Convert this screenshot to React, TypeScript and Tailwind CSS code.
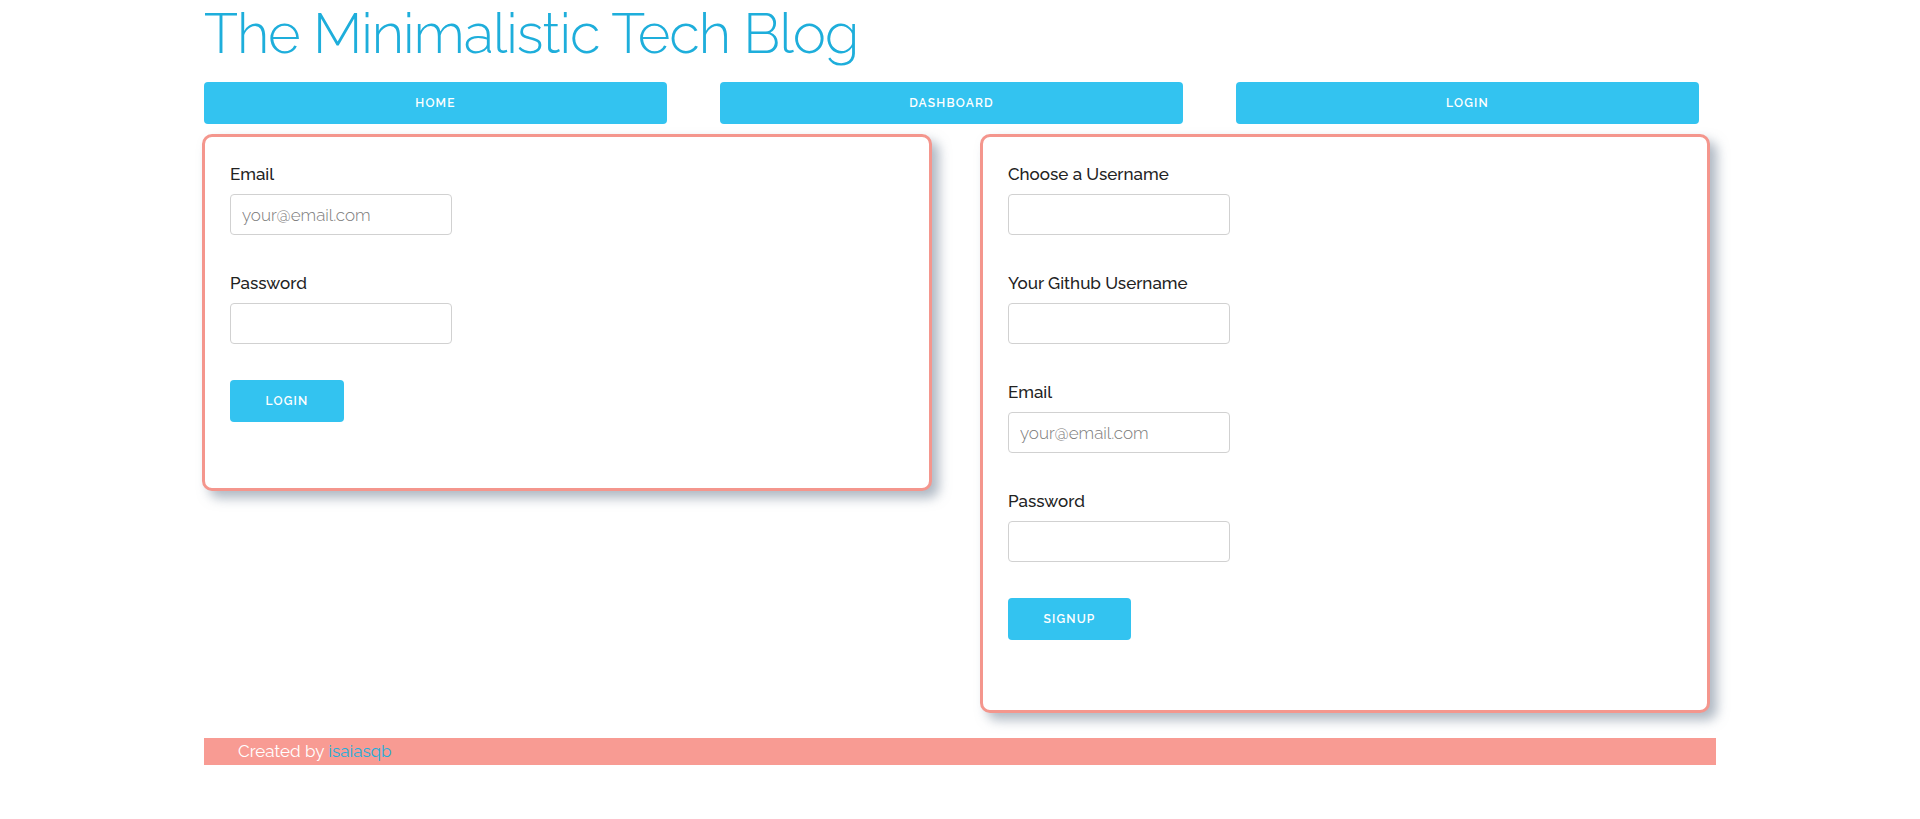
import React from "react";

const font = { fontFamily: '"Raleway", "Lato", "Noto Sans", sans-serif' };

function Field({ label, placeholder, type = "text" }: { label: string; placeholder?: string; type?: string }) {
  return (
    <div className="flex flex-col mb-[38px]">
      <label className="text-[17px] leading-[20px] font-medium text-[#222] mb-[10px]">{label}</label>
      <input
        type={type}
        placeholder={placeholder}
        className="w-[222px] h-[41px] border border-[#d1d1d1] rounded-[4px] px-[11px] text-[17px] text-[#333] placeholder:text-[#7a7a7a] placeholder:font-light bg-white outline-none"
      />
    </div>
  );
}

function Card({ children, pb }: { children: React.ReactNode; pb: string }) {
  return (
    <div
      className={`w-[730px] border-[3px] border-[#f4968d] rounded-[10px] bg-white shadow-[7px_7px_12px_rgba(110,125,145,0.55)] pt-[27px] px-[25px] ${pb}`}
    >
      {children}
    </div>
  );
}

function Btn({ children, w }: { children: React.ReactNode; w: string }) {
  return (
    <button className={`${w} h-[42px] -mt-[2px] rounded-[4px] bg-[#33c3f0] text-white text-[12px] font-semibold tracking-[1.2px] uppercase`}>
      {children}
    </button>
  );
}

export default function App() {
  return (
    <div className="min-h-[819px] bg-white" style={font}>
      <div className="w-[1512px] mx-auto">
        <h1
          className="text-[56px] leading-[66px] text-[#1eaedb] tracking-[-1.05px]"
          style={{ fontFamily: '"Raleway", "Inter", sans-serif', fontWeight: 300 }}
        >
          The Minimalistic Tech Blog
        </h1>
        <nav className="flex gap-[53px] mt-[16px]">
          {["Home", "Dashboard", "Login"].map((t) => (
            <a
              key={t}
              className="w-[463px] h-[42px] rounded-[4px] bg-[#33c3f0] text-white text-[12px] font-semibold tracking-[1.2px] uppercase flex items-center justify-center"
            >
              {t}
            </a>
          ))}
        </nav>
        <div className="flex items-start gap-[48px] mt-[10px] ml-[-2px]">
          <Card pb="pb-[66px]">
            <Field label="Email" placeholder="your@email.com" />
            <Field label="Password" type="password" />
            <Btn w="w-[114px]">Login</Btn>
          </Card>
          <Card pb="pb-[70px]">
            <Field label="Choose a Username" />
            <Field label="Your Github Username" />
            <Field label="Email" placeholder="your@email.com" />
            <Field label="Password" type="password" />
            <Btn w="w-[123px]">Signup</Btn>
          </Card>
        </div>
        <footer className="mt-[25px] h-[27px] bg-[#f89b93] flex items-center pl-[34px] text-[17px] text-white">
          <span>
            Created by <a className="text-[#1eaedb]">isaiasqb</a>
          </span>
        </footer>
      </div>
    </div>
  );
}
